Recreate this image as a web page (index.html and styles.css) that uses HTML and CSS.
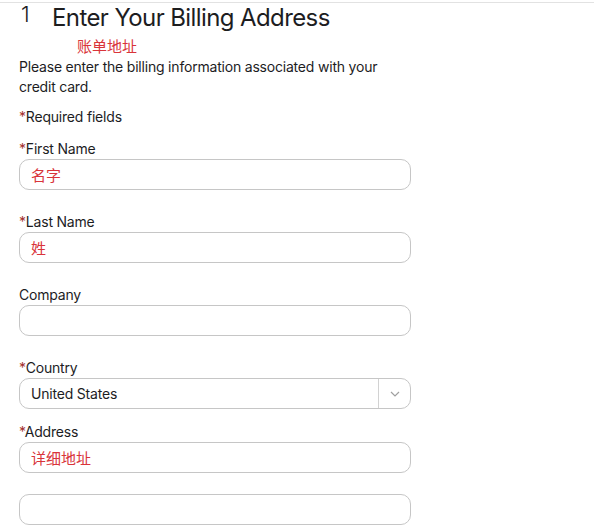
FILE: index.html
```html
<!DOCTYPE html>
<html lang="en">
<head>
    <meta charset="UTF-8">
    <meta name="viewport" content="width=device-width, initial-scale=1.0">
    <title>Billing Address</title>
    <link rel="stylesheet" href="styles.css">
</head>
<body>
    <div class="page">
        <header class="step-header">
            <span class="step-num">1</span>
            <h1 class="step-title">Enter Your Billing Address</h1>
        </header>
        <div class="note-cn">账单地址</div>
        <p class="intro">Please enter the billing information associated with your credit card.</p>
        <p class="required"><span class="star">*</span>Required fields</p>

        <div class="field">
            <label for="first"><span class="star">*</span>First Name</label>
            <input id="first" class="text-input cn" type="text" value="名字">
        </div>
        <div class="field">
            <label for="last"><span class="star">*</span>Last Name</label>
            <input id="last" class="text-input cn" type="text" value="姓">
        </div>
        <div class="field">
            <label for="company">Company</label>
            <input id="company" class="text-input" type="text">
        </div>
        <div class="field field-tight">
            <label><span class="star">*</span>Country</label>
            <div class="select-box">
                <span class="select-value">United States</span>
                <span class="select-arrow">
                    <svg width="10" height="6" viewBox="0 0 10 6"><path d="M1 1 L5 5 L9 1" fill="none" stroke="#a0a0a0" stroke-width="1.2"/></svg>
                </span>
            </div>
        </div>
        <div class="field field-addr">
            <label for="addr1"><span class="star">*</span>Address</label>
            <input id="addr1" class="text-input cn" type="text" value="详细地址">
        </div>
        <div class="field field-addr2">
            <input class="text-input" type="text">
        </div>
    </div>
</body>
</html>
```
FILE: styles.css
```css
body {
    margin: 0;
    padding: 0;
    background: #fff;
    color: #1d1d1f;
    font-family: Inter, "Noto Sans", Arial, sans-serif;
    font-size: 14px;
    letter-spacing: -0.2px;
    overflow: hidden;
}
.page {
    margin-top: 2px;
    border-top: 1px solid #e2e2e2;
    padding-left: 19px;
}
.step-header {
    display: flex;
    align-items: flex-start;
    height: 32px;
}
.step-num {
    font-size: 22px;
    line-height: 22px;
    width: 33px;
    padding-left: 2px;
    box-sizing: border-box;
    font-weight: 300;
}
.step-title {
    margin: 0;
    font-size: 24px;
    font-weight: 400;
    line-height: 30px;
    letter-spacing: -0.6px;
}
.note-cn {
    margin-left: 58px;
    margin-top: 2px;
    color: #d9343a;
    font-family: "Noto Sans CJK SC", sans-serif;
    font-size: 15px;
    line-height: 18px;
    letter-spacing: 0;
}
.intro {
    margin: 2px 0 0;
    max-width: 380px;
    line-height: 20px;
}
.required {
    margin: 10px 0 0;
    line-height: 20px;
}
.star {
    color: #a3302c;
}
.field {
    margin-top: 12px;
    width: 392px;
}
.field + .field {
    margin-top: 22px;
}
.field label {
    display: block;
    line-height: 20px;
    margin-bottom: 0;
}
.text-input {
    display: block;
    width: 100%;
    height: 31px;
    box-sizing: border-box;
    border: 1px solid #c6c6c6;
    border-radius: 10px;
    padding: 0 11px;
    font-family: Inter, "Noto Sans", Arial, sans-serif;
    font-size: 14px;
    color: #1d1d1f;
    background: #fff;
    outline: none;
}
.text-input.cn {
    color: #d9343a;
    font-family: "Noto Sans CJK SC", sans-serif;
    font-size: 15px;
}
.select-box {
    display: flex;
    align-items: stretch;
    height: 31px;
    box-sizing: border-box;
    border: 1px solid #c6c6c6;
    border-radius: 10px;
}
.select-value {
    flex: 1;
    display: flex;
    align-items: center;
    padding-left: 11px;
}
.select-arrow {
    width: 31px;
    border-left: 1px solid #d2d2d2;
    display: flex;
    align-items: center;
    justify-content: center;
}
.field + .field-addr {
    margin-top: 13px;
}
.field + .field-addr2 {
    margin-top: 21px;
}
```
